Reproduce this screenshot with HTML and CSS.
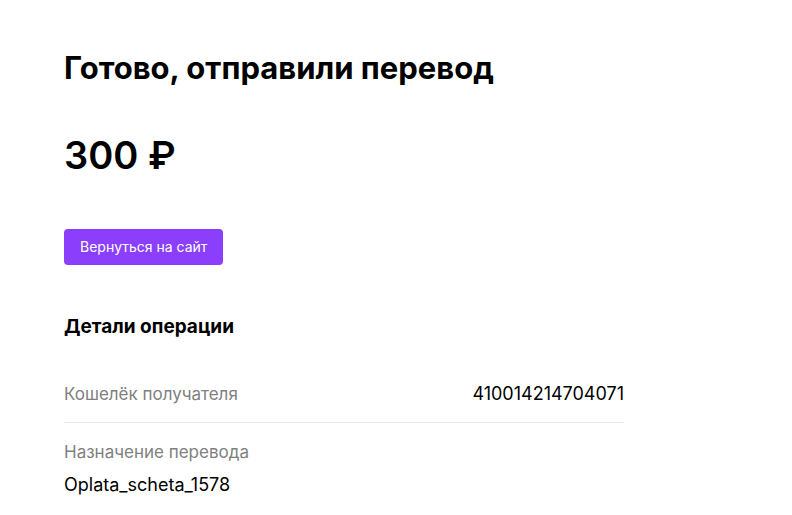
FILE: index.html
```html
<!DOCTYPE html>
<html lang="ru">
<head>
    <meta charset="UTF-8">
    <meta name="viewport" content="width=device-width, initial-scale=1.0">
    <title>Перевод отправлен</title>
    <link rel="stylesheet" href="styles.css">
</head>
<body>

    <div class="container">
        <h1 class="title">Готово, отправили перевод</h1>
        <div class="amount">300 ₽</div>
        <a class="back-btn" href="#">Вернуться на сайт</a>

        <div class="details">
            <h2 class="details-title">Детали операции</h2>
            <div class="row row-inline">
                <span class="label">Кошелёк получателя</span>
                <span class="value">410014214704071</span>
            </div>
            <div class="row">
                <div class="label">Назначение перевода</div>
                <div class="value">Oplata_scheta_1578</div>
            </div>
        </div>
    </div>

</body>
</html>
```

FILE: styles.css
```css
body {
    font-family: Inter, "Noto Sans", Arial, sans-serif;
    background-color: #fff;
    color: #000;
    margin: 0;
    padding: 0;
}
.container {
    padding: 40px 64px 0;
    width: 560px;
}
.title {
    font-size: 31px;
    font-weight: 700;
    line-height: 56px;
    margin: 0;
}
.amount {
    font-size: 38px;
    font-weight: 600;
    line-height: 48px;
    margin-top: 35px;
}
.back-btn {
    display: inline-block;
    margin-top: 50px;
    height: 36px;
    line-height: 36px;
    padding: 0 16px;
    background-color: #8b3ffd;
    color: #fff;
    font-size: 14px;
    border-radius: 4px;
    text-decoration: none;
}
.details {
    margin-top: 50px;
}
.details-title {
    font-size: 19px;
    font-weight: 700;
    margin: 0;
    line-height: 24px;
}
.row {
    padding: 17px 0 0;
    font-size: 17px;
    line-height: 24px;
}
.row-inline {
    display: flex;
    justify-content: space-between;
    padding: 43px 0 16px;
    border-bottom: 1px solid #ebebeb;
}
.label {
    color: #808080;
}
.value {
    font-size: 18px;
}
.row .value {
    margin-top: 9px;
}
.row-inline .value {
    margin-top: 0;
}
```
